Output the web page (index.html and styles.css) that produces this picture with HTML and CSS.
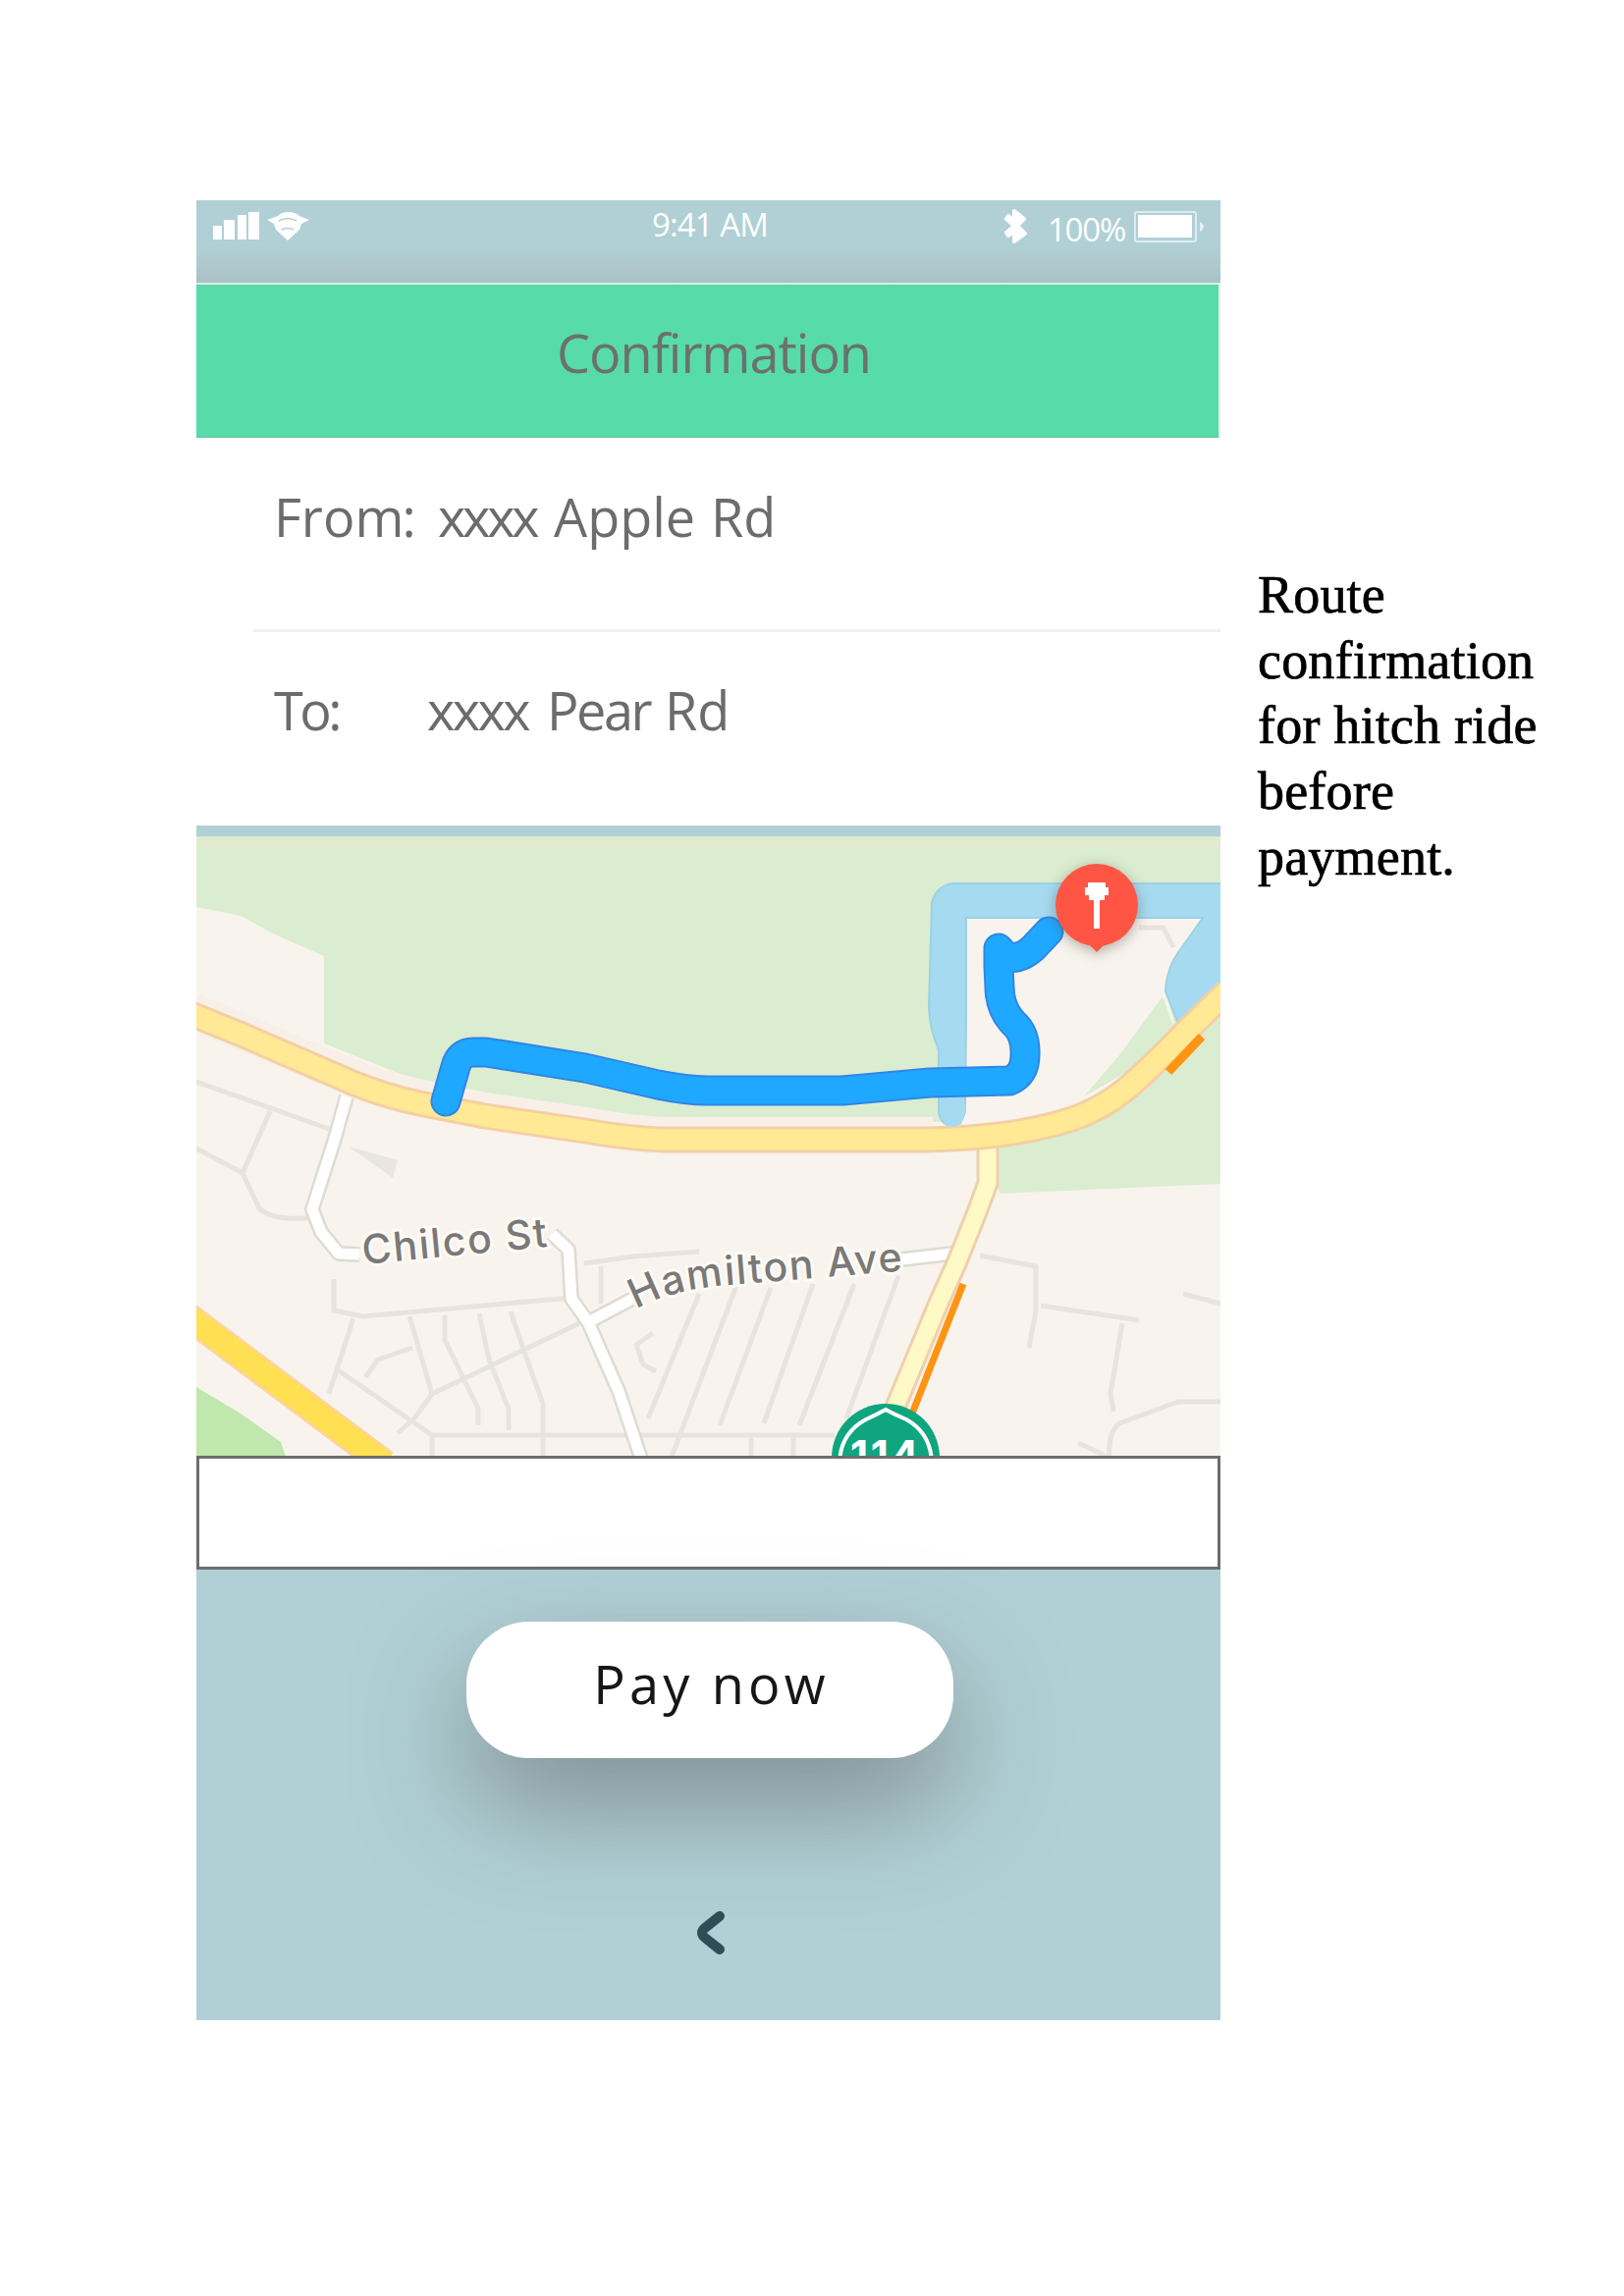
FILE: index.html
```html
<!DOCTYPE html>
<html lang="en">
<head>
<meta charset="utf-8">
<title>Confirmation</title>
<link rel="stylesheet" href="styles.css">
</head>
<body>
<main class="phone">
  <div class="status">
    <svg class="signal" viewBox="0 0 100 36" width="100" height="36">
      <path fill="#fff" d="M0 18h9v14H0zM11 12h11v20H11zM25 7h9v25h-9zM36 4h11v28H36z"/>
      <path fill="#fff" d="M55 12L66 8Q70 4 77 4 84 4 88 8L98 12 90 16 88 22 76 33 64 22 62 16z"/>
      <path fill="none" stroke="#b0ced3" stroke-width="1.5" d="M67 13q9-5 18 0M70 22q6-3 12 0"/>
    </svg>
    <span class="clock">9:41 AM</span>
    <div class="power">
      <svg viewBox="0 0 24 36" width="24" height="36">
        <path fill="#fff" stroke="#fff" stroke-width="4" stroke-linejoin="round" d="M10 3l10 8-7 7 8 8-11 8V23l-6 5-2-3 8-7-8-7 2-3 6 5z"/>
      </svg>
      <span class="percent">100%</span>
      <svg viewBox="0 0 74 36" width="74" height="36">
        <rect x="1" y="4" width="62" height="30" rx="2" fill="none" stroke="#dcedf0" stroke-width="2"/>
        <rect x="4" y="7" width="55" height="23" fill="#fff"/>
        <path fill="#e4f1f3" d="M67 14q8 5 0 10z"/>
      </svg>
    </div>
  </div>
  <header class="title"><h1>Confirmation</h1></header>
  <section class="fields">
    <div class="row"><span class="label from">From<i>:</i></span><span class="xs">xxxx</span><span class="apple">Apple</span><span>Rd</span></div>
    <div class="row second"><span class="label to">To:</span><span class="xs wide">xxxx</span><span class="pear">Pear</span><span>Rd</span></div>
  </section>
  <svg class="map" viewBox="200 852 1043 632" width="1043" height="632">
    <rect x="200" y="852" width="1043" height="632" fill="#f8f4ed"/>
    <path fill="#dbedd0" d="M200 852H1243V1206L1018 1216 1005 1150 960 1143H680Q560 1135 440 1107L330 1063V974L280 952 245 933 200 924z"/>
    <path fill="#e1ebcd" d="M200 855H1243V863H200z"/>
    <path fill="#f8f4ed" d="M984 935H1226L1200 975 1187 1010 1196 1042 1110 1130 1000 1155H980z"/>
    <path fill="#dbedd0" d="M1184 1015L1195 1045 1160 1085 1104 1117 1140 1075z"/>
    <path fill="#a6daf1" stroke="#9bd1e5" stroke-width="2" d="M970 900H1245V1005L1200 1043 1187 1010Q1188 985 1203 966L1225 935H984V1040L983 1133Q978 1148 970 1148 956 1145 956 1130V1070Q946 1045 946 1025L949 920Q953 903 970 900z"/>
    <path fill="#c0e7ad" d="M200 1413L245 1440 286 1469 291 1484H200z"/>
    <g class="minor">
      <path d="M200 1102L335 1150M275 1132L247 1195 200 1170M247 1195L264 1231Q280 1245 318 1240"/>
      <path d="M340 1303V1335L370 1341 582 1322M360 1343L335 1420M417 1341L440 1420 422 1445 405 1460M453 1340V1365L487 1435V1452M488 1338L498 1385 518 1435V1457M520 1336L535 1380 553 1430V1484M440 1420L590 1348M420 1373L385 1385 372 1403M343 1395L440 1462H850M440 1462V1484M595 1287L645 1280 712 1275M612 1290V1328M665 1358L648 1370 655 1390 668 1397"/>
      <path d="M712 1318L660 1445M750 1310L684 1484M785 1312L733 1452M828 1308L778 1450M870 1308L814 1452M915 1300L862 1445M765 1465V1484M808 1465V1484"/>
      <path d="M998 1279L1055 1290V1335L1048 1373M1060 1330L1160 1345M1143 1348L1131 1420 1134 1438M1243 1428H1200L1140 1450Q1128 1460 1130 1484M1205 1318L1243 1328M1098 1470L1128 1484M1160 945H1185L1195 965"/>
    </g>
    <path fill="#e9e6df" d="M355 1168L405 1182 400 1200z"/>
    <g fill="none" stroke-linejoin="round">
      <path stroke="#dedbd5" stroke-width="16" d="M353 1117L341 1160 318 1232 327 1255 345 1277 366 1278M562 1257L579 1273 582 1323 599 1347 630 1417 653 1486M599 1347L650 1320M910 1284L970 1277"/>
      <path stroke="#fff" stroke-width="11" d="M353 1117L341 1160 318 1232 327 1255 345 1277 366 1278M562 1257L579 1273 582 1323 599 1347 630 1417 653 1486M599 1347L650 1320M910 1284L970 1277"/>
      <path stroke="#f0cfae" stroke-width="23" d="M1006 1165V1205L995 1235 975 1285 957 1325 905 1450"/>
      <path stroke="#fff9c5" stroke-width="17" d="M1006 1165V1205L995 1235 975 1285 957 1325 905 1450"/>
      <path stroke="#f8f0e8" stroke-width="38" d="M195 1030L359 1098Q400 1115 494 1132L596 1147Q650 1157 680 1157H950"/>
      <path stroke="#f5cfa4" stroke-width="27" d="M190 1031L246 1054 359 1103Q390 1116 427 1124L494 1137 596 1152Q650 1161 680 1161H940Q1030 1160 1092 1140C1150 1120 1170 1085 1250 1010"/>
      <path stroke="#ffe994" stroke-width="21" d="M190 1031L246 1054 359 1103Q390 1116 427 1124L494 1137 596 1152Q650 1161 680 1161H940Q1030 1160 1092 1140C1150 1120 1170 1085 1250 1010"/>
      <path fill="#a6daf1" d="M957 1125h27q-1 23-14 23t-13-23z"/>
      <path stroke="#ffd2a0" stroke-width="29" d="M190 1340L392 1491"/>
      <path stroke="#ffe052" stroke-width="24" d="M190 1340L392 1491"/>
      <path stroke="#ff9412" stroke-width="7" d="M981 1308L929 1440"/>
      <path stroke="#ff9412" stroke-width="9" d="M1190 1092L1224 1056"/>
    </g>
    <path id="hamilton" fill="none" d="M648 1334Q682 1314 742 1309L940 1293"/>
    <g class="street">
      <text x="370" y="1288" transform="rotate(-5.5 370 1288)" textLength="189">Chilco St</text>
      <text><textPath href="#hamilton" textLength="276">Hamilton Ave</textPath></text>
    </g>
    <circle cx="902" cy="1485" r="55" fill="#0fa57f"/>
    <path fill="none" stroke="#fff" stroke-width="4" d="M855 1490Q856 1460 882 1446 893 1441 902 1436 911 1441 923 1446 948 1460 949 1490"/>
    <text class="shield" x="901" y="1498" text-anchor="middle" textLength="70">114</text>
    <g class="route">
      <path stroke="#2f86e6" stroke-width="31" d="M454 1122L464 1087Q468 1072 482 1072H495L596 1088 670 1105Q700 1111 720 1111H858L947 1103 1028 1101Q1044 1095 1044 1075 1045 1053 1032 1042 1018 1027 1018 1005L1017 985V966L1022 972Q1035 981 1052 966L1068 949"/>
      <path stroke="#1fa8ff" stroke-width="27" d="M454 1122L464 1087Q468 1072 482 1072H495L596 1088 670 1105Q700 1111 720 1111H858L947 1103 1028 1101Q1044 1095 1044 1075 1045 1053 1032 1042 1018 1027 1018 1005L1017 985V966L1022 972Q1035 981 1052 966L1068 949"/>
    </g>
    <g class="pin">
      <path fill="#ff5545" d="M1117 970l-9-9h18z"/>
      <circle cx="1117" cy="922" r="42" fill="#ff5545"/>
      <path fill="#fff" d="M1108 899h18v5h3v8h-4v5h-5v29h-6v-29h-5v-5h-4v-8h3z"/>
    </g>
  </svg>
  <div class="blank"></div>
  <div class="actions">
    <button class="pay">Pay now</button>
    <svg class="back" viewBox="0 0 32 48" width="32" height="48"><path fill="none" stroke="#2f4c58" stroke-width="10" stroke-linecap="round" stroke-linejoin="round" d="M25 7L10 19Q4 24 10 29L25 41"/></svg>
  </div>
</main>
<aside class="note">Route confirmation for hitch ride before payment.</aside>
</body>
</html>
```
FILE: styles.css
```css
* { box-sizing: border-box; }
body {
  margin: 0;
  padding: 204px 0 0 200px;
  height: 2339px;
  display: flex;
  align-items: flex-start;
  background: #fff;
  font-family: "Open Sans", "Noto Sans", sans-serif;
}
.phone {
  width: 1043px;
  height: 1854px;
  flex: none;
  display: flex;
  flex-direction: column;
  background: #b0d0d5;
}
.status {
  height: 84px;
  flex: none;
  display: grid;
  grid-template-columns: 1fr auto 1fr;
  align-items: start;
  padding: 8px 14px 0 17px;
  color: #fff;
  background: linear-gradient(#b0d0d5 55%, #afc8cc 80%, #abc0c4);
}
.clock { font-size: 33px; line-height: 34px; letter-spacing: -0.9px; }
.power { display: flex; justify-content: flex-end; }
.percent { font-size: 33px; line-height: 43px; margin: 0 9px 0 20px; height: 36px; letter-spacing: -1.2px; }
.title {
  height: 158px;
  flex: none;
  border-top: 2px solid #c9f6e4;
  border-right: 2px solid #e3ebe9;
  background: #57dba9;
  box-shadow: inset 0 -2px 0 #62cda5, inset 0 2px 0 #64cfa9;
  display: flex;
  justify-content: center;
}
h1 {
  margin: 31px 0 0 13px;
  font-weight: 400;
  font-size: 54px;
  line-height: 76px;
  letter-spacing: -1px;
  color: #6b716d;
}
.fields { height: 395px; flex: none; background: #fff; }
.row {
  height: 195px;
  padding: 42px 0 0 79px;
  display: flex;
  font-size: 54px;
  line-height: 76px;
  color: #6c6c6c;
}
.second { margin-left: 58px; padding: 41px 0 0 21px; border-top: 3px solid #f1f1f1; }
.label { flex: none; }
.label i { font-style: normal; margin-left: -2px; }
.from { width: 167px; }
.to { width: 156px; letter-spacing: -3.5px; }
.xs { width: 118px; letter-spacing: -3.2px; }
.wide { width: 122px; letter-spacing: -2.5px; }
.apple { width: 160px; }
.pear { width: 120px; letter-spacing: -2.4px; }
.map { display: block; flex: none; margin-top: 11px; }
.minor { fill: none; stroke: #e7e4dd; stroke-width: 5; stroke-linejoin: round; }
.street {
  font: 500 41px Inter, sans-serif;
  fill: #7b7977;
  stroke: #fcfaf6;
  stroke-width: 6px;
  paint-order: stroke;
}
.shield { font: 700 42px Inter, sans-serif; fill: #fff; }
.route { fill: none; stroke-linecap: round; stroke-linejoin: round; }
.pin { filter: drop-shadow(0 3px 7px rgba(90, 80, 70, .45)); }
.blank { height: 116px; flex: none; margin-top: -1px; background: #fff; border: 3px solid #6b6d6f; }
.actions { display: flex; flex-direction: column; align-items: center; }
.pay {
  margin: 53px 0 0 2px;
  width: 496px;
  height: 139px;
  padding: 0 0 13px 4px;
  border: 0;
  border-radius: 64px;
  background: #fff;
  box-shadow: 0 48px 110px rgba(90, 85, 90, .52);
  font: 400 54px "Open Sans", sans-serif;
  letter-spacing: 4.2px;
  color: #161616;
}
.back { margin: 154px 0 0 4px; }
.note {
  width: 330px;
  margin: 369px 0 0 38px;
  font: 54px/66.7px "Liberation Serif", serif;
  letter-spacing: 0.2px;
  color: #000;
  -webkit-text-stroke: 0.7px #000;
}
```
